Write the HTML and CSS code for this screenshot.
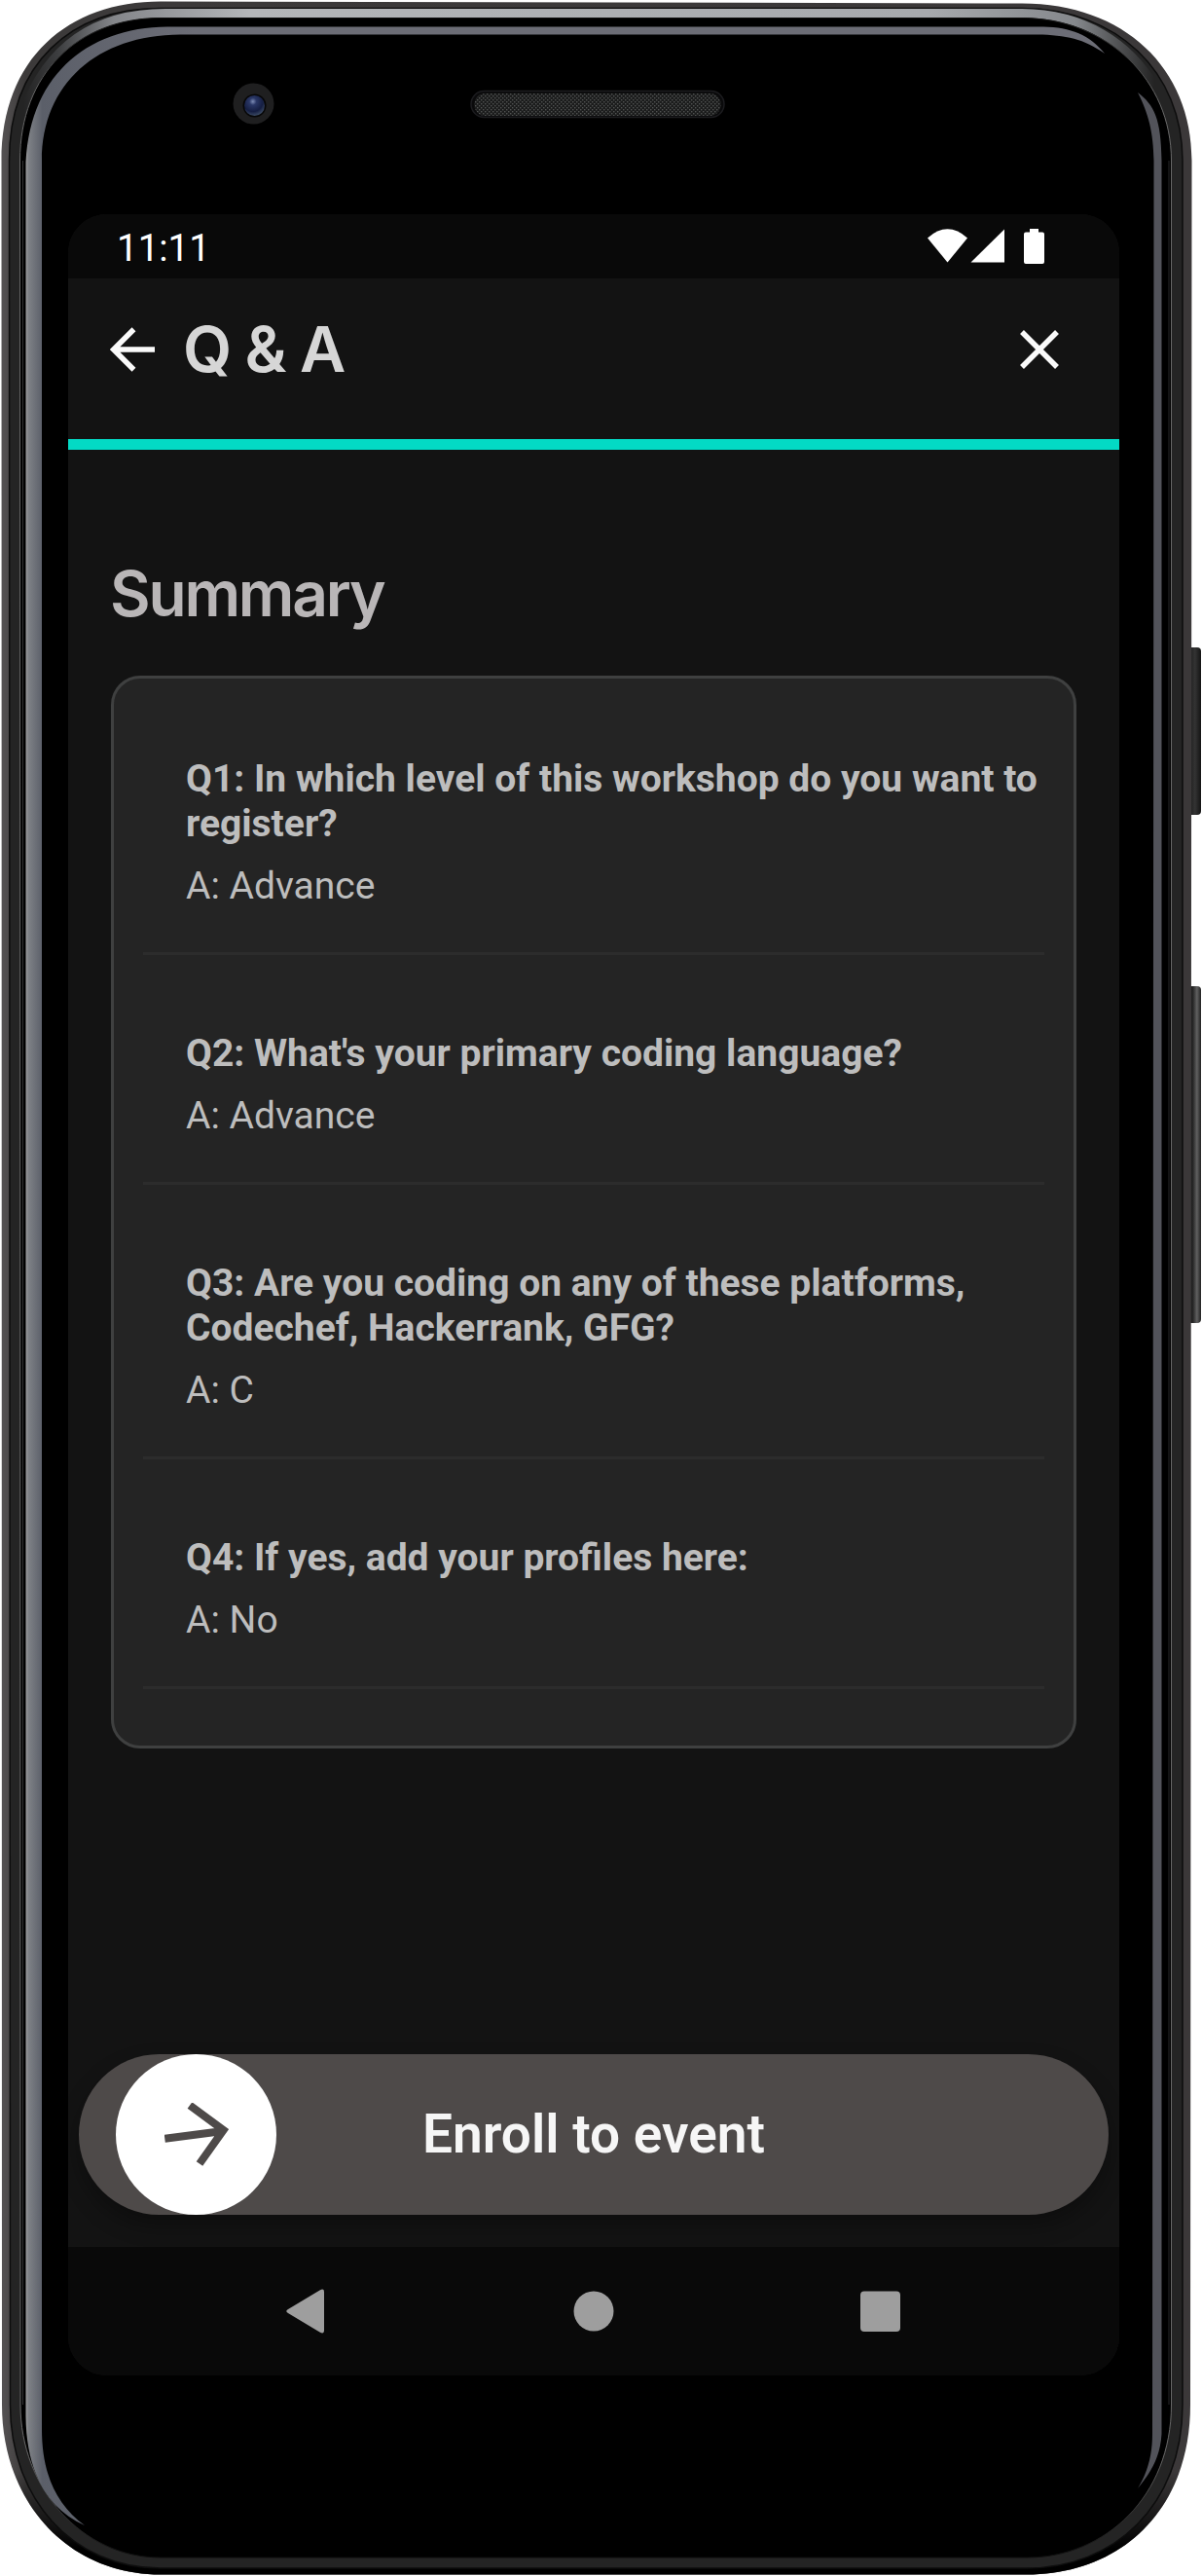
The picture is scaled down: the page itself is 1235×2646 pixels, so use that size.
FILE: index.html
```html
<!DOCTYPE html>
<html lang="en">
<head>
<meta charset="utf-8">
<title>Q &amp; A</title>
<link rel="stylesheet" href="styles.css">
</head>
<body>
<div class="device">
  <svg class="frame" viewBox="0 0 1235 2646" aria-hidden="true">
    <defs>
      <linearGradient id="rim" x1="0" y1="0" x2="1" y2="0"><stop offset="0" stop-color="#555253"/><stop offset=".02" stop-color="#3c3a3a"/><stop offset="1" stop-color="#3b3839"/></linearGradient>
      <linearGradient id="dark" x1="0" y1="0" x2="0" y2="1"><stop offset="0" stop-color="#000" stop-opacity="0"/><stop offset=".96" stop-color="#000" stop-opacity="0"/><stop offset=".99" stop-color="#000"/></linearGradient>
      <linearGradient id="shine" x1="0" y1="0" x2="1" y2="0"><stop offset="0" stop-color="#242424"/><stop offset=".03" stop-color="#3c3d3f"/><stop offset=".08" stop-color="#84868a"/><stop offset=".2" stop-color="#b4b6b9"/><stop offset=".8" stop-color="#a7a9ad"/><stop offset=".93" stop-color="#85888c"/><stop offset="1" stop-color="#242424"/></linearGradient>
      <linearGradient id="edge" x1="0" y1="0" x2="0" y2="1"><stop offset="0" stop-color="#111"/><stop offset=".03" stop-color="#686868"/><stop offset=".96" stop-color="#686868"/><stop offset="1" stop-color="#0c0c0c"/></linearGradient>
      <linearGradient id="glassL" gradientUnits="userSpaceOnUse" x1="26" y1="0" x2="200" y2="0"><stop offset="0" stop-color="#a0a0a0"/><stop offset=".02" stop-color="#7e8186"/><stop offset=".1" stop-color="#5b5f69"/><stop offset="1" stop-color="#6c6d76"/></linearGradient>
      <linearGradient id="btn" x1="0" y1="0" x2="1" y2="0"><stop offset="0" stop-color="#151515"/><stop offset=".55" stop-color="#333"/><stop offset="1" stop-color="#151515"/></linearGradient>
      <linearGradient id="btn2" x1="0" y1="0" x2="1" y2="0"><stop offset="0" stop-color="#151515"/><stop offset=".4" stop-color="#262626"/><stop offset=".7" stop-color="#606060"/><stop offset="1" stop-color="#222"/></linearGradient>
      <pattern id="mesh" width="4" height="4" patternUnits="userSpaceOnUse"><rect width="4" height="4" fill="#1b1c1c"/><rect width="1.4" height="1.4" fill="#505251"/><rect x="2" y="2" width="1.4" height="1.4" fill="#505251"/></pattern>
      <radialGradient id="lens" cx=".42" cy=".3" r=".7"><stop offset="0" stop-color="#7d8cb5"/><stop offset=".25" stop-color="#2a3766"/><stop offset=".7" stop-color="#151e42"/><stop offset="1" stop-color="#3b4a63"/></radialGradient>
    </defs>
    <rect x="1220" y="665" width="14" height="172" rx="4" fill="url(#btn)"/>
    <rect x="1220" y="1013" width="14" height="346" rx="4" fill="url(#btn2)"/>
    <path d="M1.500 165C1.500 60 70 1.500 165 1.500L1050 3.500C1155 3.500 1224.500 70 1224.500 165L1223 2470C1223 2580 1150 2644.500 1055 2644.500H165C70 2644.500 2 2570 2 2470Z" fill="url(#rim)"/>
    <path d="M1.500 165C1.500 60 70 1.500 165 1.500L1050 3.500C1155 3.500 1224.500 70 1224.500 165L1223 2470C1223 2580 1150 2644.500 1055 2644.500H165C70 2644.500 2 2570 2 2470Z" fill="url(#dark)"/>
    <path d="M9.500 165C9.500 66 72 8.500 165 8.500H1050C1148 9 1215 74 1215 165V2470C1215 2574 1144 2638 1055 2638H165C74 2638 10.500 2566 10.500 2470Z" fill="#242424" stroke="#0d0d0d" stroke-width="1.500"/>
    <path d="M24 115C50 45 100 13.500 170 13.500H1050C1115 14 1160 45 1186 88" fill="none" stroke="url(#shine)" stroke-width="9"/>
    <path d="M20.500 165C20.500 76 80 18.500 165 18.500H1050C1138 19 1203.500 82 1203.500 165V2470C1203.500 2564 1136 2627 1055 2627H165C84 2627 21 2556 21 2470Z" fill="#000" stroke="url(#edge)" stroke-width="1"/>
    <path d="M23.500 165V2470" stroke="#333" stroke-width="1"/>
    <path d="M1201 165V2470" stroke="#29292b" stroke-width="1"/>
    <path d="M26.500 175C27 80 88 28 172 27.500H1072C1100 28 1120 36 1135 55C1114 40 1095 36 1066 35.500H185C100 36 43 86 43 165V2495C43 2540 57 2572 87 2594C48 2577 27 2538 26.500 2482Z" fill="url(#glassL)"/>
    <path d="M1169 95C1186 108 1193 122 1193.500 165V2500C1192 2525 1182 2540 1169 2556C1180 2538 1184 2520 1184 2500L1185.500 165C1185 135 1180 117 1169 95Z" fill="#52535a"/>
    <circle cx="260.500" cy="106.500" r="21" fill="#1f1f20"/>
    <circle cx="261.500" cy="108.500" r="12" fill="#070707"/>
    <circle cx="261.500" cy="108.500" r="10.500" fill="url(#lens)"/>
    <rect x="484" y="93.500" width="260" height="27" rx="13.500" fill="#0a0a0b" stroke="#1c1c1f" stroke-width="1.500"/>
    <rect x="487.500" y="96" width="253" height="23" rx="11" fill="url(#mesh)"/>
  </svg>
  <main class="screen">
    <div class="status">
      <span class="clock">11:11</span>
      <svg class="signals" viewBox="0 0 120 36" aria-hidden="true">
        <path d="M0 9.500Q20.500-8.800 41 9.500L20.500 34.500Z"/><path d="M44.500 34.500L79 .500V34.500Z"/>
        <path d="M105 0h9v3.500h4q2 0 2 2V34q0 2-2 2h-17q-2 0-2-2V5.500q0-2 2-2h4Z"/>
      </svg>
    </div>
    <header class="appbar">
      <svg class="back" viewBox="0 0 46 46" aria-hidden="true"><path d="M24.500 2.200L3.700 23L24.500 43.800M3.700 23H46"/></svg>
      <h1 class="title">Q &amp; A</h1>
      <svg class="close" viewBox="0 0 40 40" aria-hidden="true"><path d="M2 2L38 38M38 2L2 38"/></svg>
    </header>
    <section class="content">
      <h2 class="heading">Summary</h2>
      <div class="card">
        <div class="item"><p class="question">Q1: In which level of this workshop do you want to register?</p><p class="answer">A: Advance</p></div>
        <div class="item"><p class="question">Q2: What's your primary coding language?</p><p class="answer">A: Advance</p></div>
        <div class="item"><p class="question">Q3: Are you coding on any of these platforms, Codechef, Hackerrank, GFG?</p><p class="answer">A: C</p></div>
        <div class="item"><p class="question">Q4: If yes, add your profiles here:</p><p class="answer">A: No</p></div>
      </div>
    </section>
    <div class="slider">
      <span class="knob"><svg class="arrow" viewBox="0 0 66 66" aria-hidden="true"><path d="M.300 36.800L60 29M26 2.500L60.500 28L36 62.500"/></svg></span>
      <span class="label">Enroll to event</span>
    </div>
    <nav class="navbar">
      <svg class="navicon" viewBox="0 0 48 48" aria-hidden="true"><path d="M6 22L38.500 2.500Q43 0 43 4V44Q43 48 38.500 45.500L6 26Q2.500 24 6 22Z"/></svg>
      <svg class="navicon" viewBox="0 0 48 48" aria-hidden="true"><circle cx="24" cy="24" r="20.500"/></svg>
      <svg class="navicon" viewBox="0 0 48 48" aria-hidden="true"><rect x="3" y="3.500" width="41" height="41.500" rx="4"/></svg>
    </nav>
  </main>
</div>
</body>
</html>
```
FILE: styles.css
```css
* { box-sizing: border-box; }
body { margin: 0; background: #fff; font-family: Roboto, "Liberation Sans", sans-serif; }
h1, h2, p { margin: 0; }
.device { position: relative; width: 1235px; height: 2646px; padding: 220px 85px 206px 70px; }
.frame { position: absolute; inset: 0; width: 1235px; height: 2646px; }
.screen { position: relative; display: flex; flex-direction: column; width: 1080px; height: 2220px; background: #131313; border-radius: 40px; overflow: hidden; }
.status { display: flex; align-items: flex-start; justify-content: space-between; height: 66px; padding: 15px 77px 0 50px; background: #090909; color: #fff; }
.clock { font-size: 38.500px; line-height: 40px; }
.signals { width: 120px; height: 36px; fill: #fff; }
.appbar { display: flex; align-items: center; height: 176px; padding: 0 62px 20px 44px; border-bottom: 11px solid #03dac5; }
.back { width: 46px; height: 46px; margin-left: -1px; fill: none; stroke: #fafafa; stroke-width: 5.500; }
.title { flex: 1; margin-left: 29px; font-family: Inter, sans-serif; font-size: 65px; line-height: 80px; font-weight: 600; word-spacing: -3px; color: #d6d6d6; }
.close { width: 40px; height: 40px; fill: none; stroke: #fafafa; stroke-width: 5.500; }
.content { padding: 108px 44px 0; }
.heading { margin-left: -1px; font-family: Inter, sans-serif; font-size: 64px; line-height: 80px; font-weight: 600; letter-spacing: -2.200px; color: #b9b6b7; }
.card { margin-top: 44px; height: 1102px; padding: 2px 30px 0; border: 3px solid #3f4040; border-radius: 30px; background: #242424; color: #bdbdbd; }
.item { padding: 78px 0 45px 44px; border-bottom: 3px solid #2c2c2c; font-size: 39px; line-height: 46px; }
.question { font-weight: 700; }
.answer { margin-top: 18px; }
.slider { display: flex; align-items: center; width: 1058px; height: 165px; margin: auto 11px 33px; padding-left: 38px; border-radius: 83px; background: #4e4a49; box-shadow: 0 11px 22px rgba(0, 0, 0, .3); }
.knob { display: flex; align-items: center; justify-content: center; width: 165px; height: 165px; border-radius: 50%; background: #fff; }
.arrow { width: 66px; height: 66px; fill: none; stroke: #4e4a49; stroke-width: 8; }
.label { margin-left: 150px; padding-bottom: 1px; font-size: 55px; line-height: 64px; font-weight: 600; color: #f6f6f6; }
.navbar { display: flex; align-items: center; justify-content: space-between; height: 132px; padding: 0 221px 0 220px; background: #090909; }
.navicon { width: 48px; height: 48px; fill: #9e9e9e; }
```
